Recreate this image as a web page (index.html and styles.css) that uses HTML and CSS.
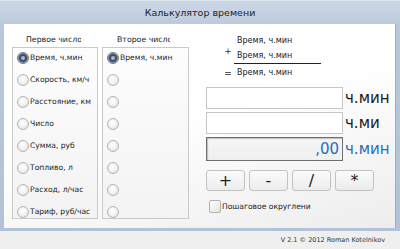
FILE: index.html
```html
<!DOCTYPE html>
<html lang="ru">
<head>
<meta charset="utf-8">
<title>Калькулятор времени</title>
<link rel="stylesheet" href="styles.css">
</head>
<body>
<div class="window">
  <div class="title">Калькулятор времени</div>
  <div class="panel">
    <div class="group">
      <div class="group-label">Первое число</div>
      <div class="box">
        <div class="row"><span class="radio checked"></span><span class="rtext">Время, ч.мин</span></div>
        <div class="row"><span class="radio"></span><span class="rtext">Скорость, км/ч</span></div>
        <div class="row"><span class="radio"></span><span class="rtext">Расстояние, км</span></div>
        <div class="row"><span class="radio"></span><span class="rtext">Число</span></div>
        <div class="row"><span class="radio"></span><span class="rtext">Сумма, руб</span></div>
        <div class="row"><span class="radio"></span><span class="rtext">Топливо, л</span></div>
        <div class="row"><span class="radio"></span><span class="rtext">Расход, л/час</span></div>
        <div class="row"><span class="radio"></span><span class="rtext">Тариф, руб/час</span></div>
      </div>
    </div>
    <div class="group group2">
      <div class="group-label">Второе число</div>
      <div class="box">
        <div class="row"><span class="radio checked"></span><span class="rtext">Время, ч.мин</span></div>
        <div class="row"><span class="radio"></span></div>
        <div class="row"><span class="radio"></span></div>
        <div class="row"><span class="radio"></span></div>
        <div class="row"><span class="radio"></span></div>
        <div class="row"><span class="radio"></span></div>
        <div class="row"><span class="radio"></span></div>
        <div class="row"><span class="radio"></span></div>
      </div>
    </div>
    <div class="right">
      <div class="formula">
        <div class="frow"><span class="sign"></span><span class="ftext">Время, ч.мин</span></div>
        <div class="frow frow2"><span class="sign plus">+</span><span class="ftext under">Время, ч.мин</span></div>
        <div class="frow frow3"><span class="sign eq">=</span><span class="ftext">Время, ч.мин</span></div>
      </div>
      <div class="inputs">
        <div class="irow"><div class="field"></div><span class="unit">ч.мин</span></div>
        <div class="irow"><div class="field"></div><span class="unit">ч.ми</span></div>
        <div class="irow"><div class="field result">,00</div><span class="unit blue">ч.мин</span></div>
      </div>
      <div class="buttons">
        <div class="btn">+</div>
        <div class="btn">-</div>
        <div class="btn">/</div>
        <div class="btn">*</div>
      </div>
      <div class="check"><span class="checkbox"></span><span class="ctext">Пошаговое округлени</span></div>
    </div>
  </div>
</div>
<div class="footer">V 2.1 © 2012 Roman Kotelnikov</div>
</body>
</html>
```
FILE: styles.css
```css
html, body {
  margin: 0;
  padding: 0;
}
body {
  width: 400px;
  height: 249px;
  overflow: hidden;
  background: #efefef;
  font-family: "DejaVu Sans", Verdana, sans-serif;
  color: #222;
  display: flex;
  flex-direction: column;
}
.window {
  height: 231px;
  box-sizing: border-box;
  padding: 0 4px 3px 4px;
  background: linear-gradient(#cdd8e6, #b9c7da 12%, #b3c2d6);
  display: flex;
  flex-direction: column;
  border-top: 1px solid #dde5ef;
}
.title {
  height: 23px;
  line-height: 23px;
  text-align: center;
  font-size: 9.5px;
  color: #1e1e1e;
}
.panel {
  flex: 1;
  display: flex;
  padding-left: 8px;
  background: linear-gradient(165deg, #ffffff 45%, #ededed 100%);
  border-right: 1px solid #9eadc2;
}
.group {
  display: flex;
  flex-direction: column;
  width: 86px;
}
.group2 {
  margin-left: 4px;
  width: 87px;
}
.group-label {
  margin-top: 9px;
  height: 14px;
  line-height: 14px;
  padding-left: 14px;
  width: 55px;
  overflow: hidden;
  white-space: nowrap;
  font-size: 7.8px;
}
.group2 .group-label {
  padding-left: 15px;
  width: 53px;
}
.box {
  height: 172px;
  box-sizing: border-box;
  border: 1px solid #c9c9c9;
  padding: 3px 0 0 4px;
  display: flex;
  flex-direction: column;
  gap: 9px;
  overflow: hidden;
  background: linear-gradient(#fdfdfd, #f3f3f3);
}
.row {
  height: 13px;
  display: flex;
  align-items: center;
  white-space: nowrap;
}
.radio {
  flex: none;
  width: 12px;
  height: 12px;
  box-sizing: border-box;
  border-radius: 50%;
  border: 1px solid #b4b4b4;
  background: radial-gradient(circle at 45% 40%, #ffffff 0, #f4f4f4 40%, #dedede 100%);
}
.radio.checked {
  border-color: #6a7890;
  background: radial-gradient(circle at 50% 50%, #c9d3e3 0, #9aa9c2 1.5px, #45536d 2.5px, #3c4962 3.5px, #7d8aa2 4.5px, #d6dbe4 5.5px);
}
.rtext {
  margin-left: 1px;
  font-size: 7.6px;
  color: #1e1e1e;
}
.right {
  margin-left: 17px;
  display: flex;
  flex-direction: column;
}
.formula {
  margin-top: 9px;
  margin-left: 16px;
  font-size: 8px;
}
.frow {
  display: flex;
  height: 15px;
  align-items: center;
}
.sign {
  width: 12px;
  flex: none;
  text-align: center;
  font-size: 9px;
}
.plus {
  align-self: flex-start;
  line-height: 7px;
  color: #333;
}
.eq {
  font-weight: bold;
  color: #555;
}
.ftext {
  padding-left: 3px;
  white-space: nowrap;
}
.under {
  width: 84px;
  height: 15px;
  line-height: 15px;
  border-bottom: 1px solid #222;
}
.frow3 {
  margin-top: 2px;
}
.inputs {
  margin-top: 7px;
  display: flex;
  flex-direction: column;
  gap: 3px;
}
.irow {
  display: flex;
  align-items: center;
  height: 22px;
}
.field {
  width: 137px;
  height: 22px;
  box-sizing: border-box;
  border: 1px solid #c6c6c6;
  background: #fff;
}
.field.result {
  height: 24px;
  border: 1px solid #6f6f6f;
  background: linear-gradient(#f6f6f6, #efefef);
  box-shadow: inset 1px 1px 1px #bdbdbd;
  color: #2470b8;
  font-size: 15px;
  line-height: 22px;
  text-align: right;
  padding-right: 3px;
}
.irow:last-child {
  height: 24px;
}
.unit {
  margin-left: 2px;
  font-size: 15px;
  color: #1a1a1a;
  white-space: nowrap;
}
.unit.blue {
  color: #2470b8;
}
.buttons {
  margin-top: 9px;
  display: flex;
  gap: 4px;
}
.btn {
  width: 39px;
  height: 21px;
  box-sizing: border-box;
  border: 1px solid #c2c2c2;
  border-radius: 3px;
  background: linear-gradient(#fbfbfb, #ececec);
  text-align: center;
  font-size: 16px;
  line-height: 19px;
  color: #1e1e1e;
}
.check {
  margin-top: 9px;
  margin-left: 3px;
  display: flex;
  align-items: center;
}
.checkbox {
  width: 12px;
  height: 13px;
  box-sizing: border-box;
  border: 1px solid #b0b0b0;
  border-radius: 2px;
  background: linear-gradient(135deg, #ffffff, #e2e2e2);
}
.ctext {
  margin-left: 1px;
  font-size: 7.6px;
  white-space: nowrap;
}
.footer {
  flex: 1;
  text-align: right;
  padding-right: 15px;
  font-size: 6.5px;
  line-height: 18px;
  color: #333;
}
```
